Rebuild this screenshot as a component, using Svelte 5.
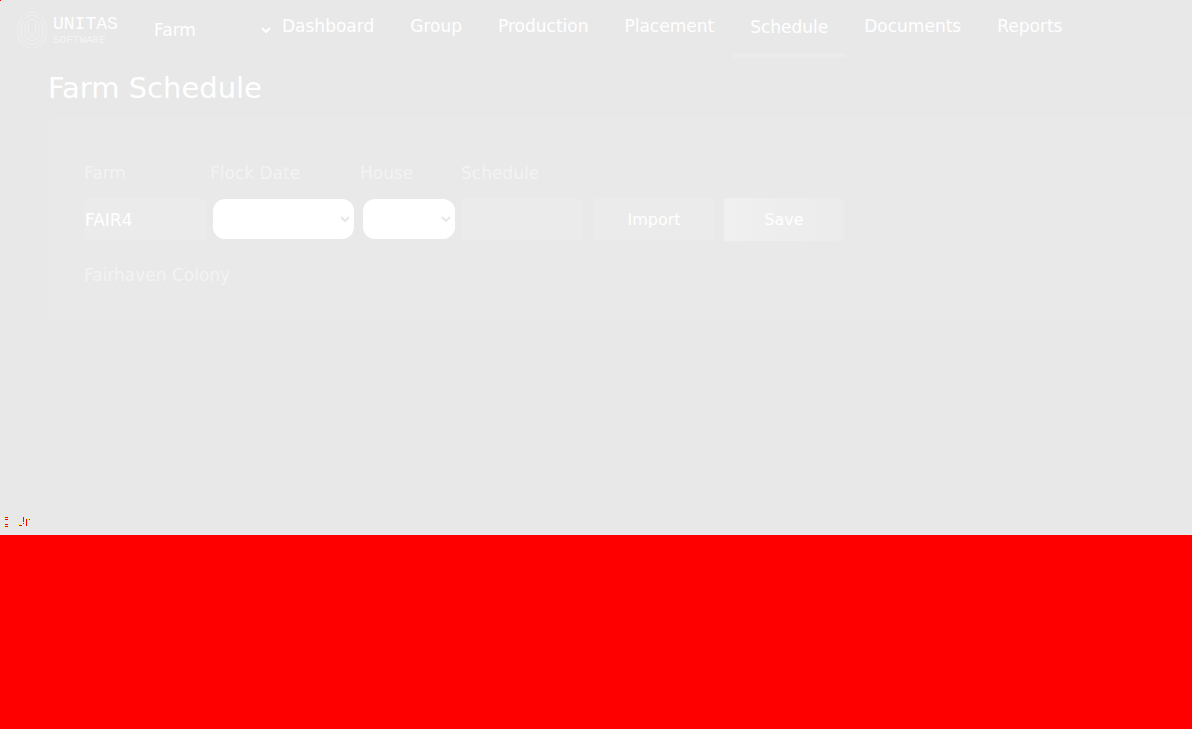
<script>
  const items = ['Dashboard', 'Group', 'Production', 'Placement', 'Schedule', 'Documents', 'Reports'];
  let current = $state('Schedule');
  let farm = $state('FAIR4');
  let schedule = $state('');
</script>

<div class="page">
  <i class="dot"></i>
  <header>
    <a class="logo" href="#home" aria-label="Unitas Software">
      <svg width="30" height="38" viewBox="0 0 30 38" fill="none" stroke="#f0f0f0" aria-hidden="true">
        <rect x="1" y="1" width="28" height="36" rx="14" />
        <rect x="4.500" y="4.500" width="21" height="29" rx="10.500" />
        <rect x="8" y="8.500" width="14" height="21" rx="7" />
        <path d="M11.500 12.500v9a3.500 3.500 0 0 0 7 0v-9" />
      </svg>
      <span class="wordmark">
        <span class="name">UNITAS</span>
        <span class="kind">SOFTWARE</span>
      </span>
    </a>
    <div class="pick scope">
      <select aria-label="Level"><option>Farm</option></select>
      <svg class="chevron" width="10" height="6" viewBox="0 0 10 6" aria-hidden="true"><path d="M1 1l4 4 4-4" /></svg>
    </div>
    <nav>
      {#each items as item}
        <a href="#{item}" class:active={item === current} onclick={() => (current = item)}>{item}</a>
      {/each}
    </nav>
  </header>

  <main>
    <h1>Farm Schedule</h1>
    <form class="card" onsubmit={(e) => e.preventDefault()}>
      <div class="fields">
        <div class="field farm">
          <label for="farm">Farm</label>
          <input id="farm" bind:value={farm} />
        </div>
        <div class="field date">
          <label for="date">Flock Date</label>
          <div class="pick box">
            <select id="date"><option></option></select>
            <svg class="chevron" width="10" height="6" viewBox="0 0 10 6" aria-hidden="true"><path d="M1 1l4 4 4-4" /></svg>
          </div>
        </div>
        <div class="field house">
          <label for="house">House</label>
          <div class="pick box">
            <select id="house"><option></option></select>
            <svg class="chevron" width="10" height="6" viewBox="0 0 10 6" aria-hidden="true"><path d="M1 1l4 4 4-4" /></svg>
          </div>
        </div>
        <div class="field sched">
          <label for="sched">Schedule</label>
          <input id="sched" bind:value={schedule} />
        </div>
        <div class="actions">
          <button type="button">Import</button>
          <button type="submit" class="save">Save</button>
        </div>
      </div>
      <p>Fairhaven Colony</p>
    </form>
  </main>

  <footer>
    <svg width="32" height="12" viewBox="0 0 32 12" shape-rendering="crispEdges" aria-hidden="true">
      <path fill="#f00" d="M5 1h3v1H5zM5 3h3v1H5zM5 8h3v1H5zM5 10h3v1H5zM19 9h3v1h-3zM23 1h1v5h-1zM23 7h1v1h-1zM26 3h1v7h-1zM29 3h1v1h-1z" />
      <path fill="#ff0" d="M4 1h1v1H4zM4 10h1v1H4zM18 8h1v1h-1zM28 3h1v1h-1z" />
    </svg>
    <div class="band"></div>
  </footer>
</div>

<style>
  :global(body) { background: #e8e8e8; }
  .page {
    position: relative;
    min-height: 100vh;
    display: flex;
    flex-direction: column;
    overflow-x: hidden;
    font: 17px/24px Verdana, "DejaVu Sans", sans-serif;
    color: #fff;
  }
  .dot { position: absolute; top: 0; left: 0; width: 1px; height: 1px; background: #f00; }
  header { display: flex; align-items: center; height: 60px; padding-left: 17px; }
  .logo { display: flex; align-items: center; gap: 6px; width: 137px; color: #fff; text-decoration: none; }
  .wordmark { display: flex; flex-direction: column; font-family: "Liberation Mono", monospace; }
  .name { font-size: 18px; line-height: 20px; color: #fff; }
  .kind { font-size: 11px; line-height: 12px; color: #f4f4f4; }
  .pick { position: relative; }
  .scope { width: 121px; margin-right: 7px; }
  select {
    display: block;
    width: 100%;
    height: 40px;
    border: 0;
    padding: 0;
    background: transparent;
    appearance: none;
    font: inherit;
    color: inherit;
  }
  .chevron { position: absolute; right: 4px; top: 17px; pointer-events: none; }
  .chevron path { fill: none; stroke: #fff; stroke-width: 2; }
  nav { display: flex; align-self: stretch; gap: 36px; }
  nav a { position: relative; padding-top: 14px; color: #fff; text-decoration: none; }
  nav a.active { padding-top: 15px; }
  nav a.active::after {
    content: "";
    position: absolute;
    left: -18px;
    right: -18px;
    top: 53px;
    height: 5px;
    background: #ebebeb;
  }
  main { padding-left: 48px; }
  h1 { margin: 8px 0; font-size: 29px; line-height: 40px; font-weight: 400; }
  .card { padding: 45px 36px 33px; border-radius: 8px 0 0 8px; background: #e9e9e9; }
  .fields { display: flex; align-items: flex-end; gap: 4px; }
  .field { display: flex; flex-direction: column; gap: 13px; }
  .farm, .sched { width: 122px; }
  .date { width: 146px; }
  .house { width: 97px; }
  label, p { color: #f3f3f3; }
  input {
    box-sizing: border-box;
    width: 100%;
    height: 43px;
    border: 0;
    border-radius: 6px;
    padding: 1px;
    background: #ebebeb;
    font: inherit;
    color: #fff;
  }
  .box { margin: 1px 2px 2px 3px; border-radius: 12px; background: #fff; }
  .box .chevron path { stroke: #e7e7e7; }
  .actions { display: flex; gap: 10px; padding-left: 4px; margin-left: auto; }
  .fields { width: max-content; }
  .sched { margin-right: 3px; }
  button {
    width: 120px;
    height: 43px;
    border: 0;
    padding: 0;
    background: #ebebeb;
    font: inherit;
    font-size: 16px;
    color: #fff;
  }
  .save { background: linear-gradient(90deg, #f0f0f0, #ebebeb); }
  p { margin: 22px 0 0; }
  footer { margin-top: auto; }
  footer svg { display: block; margin-bottom: 7px; }
  .band { height: 194px; background: #f00; }
</style>
